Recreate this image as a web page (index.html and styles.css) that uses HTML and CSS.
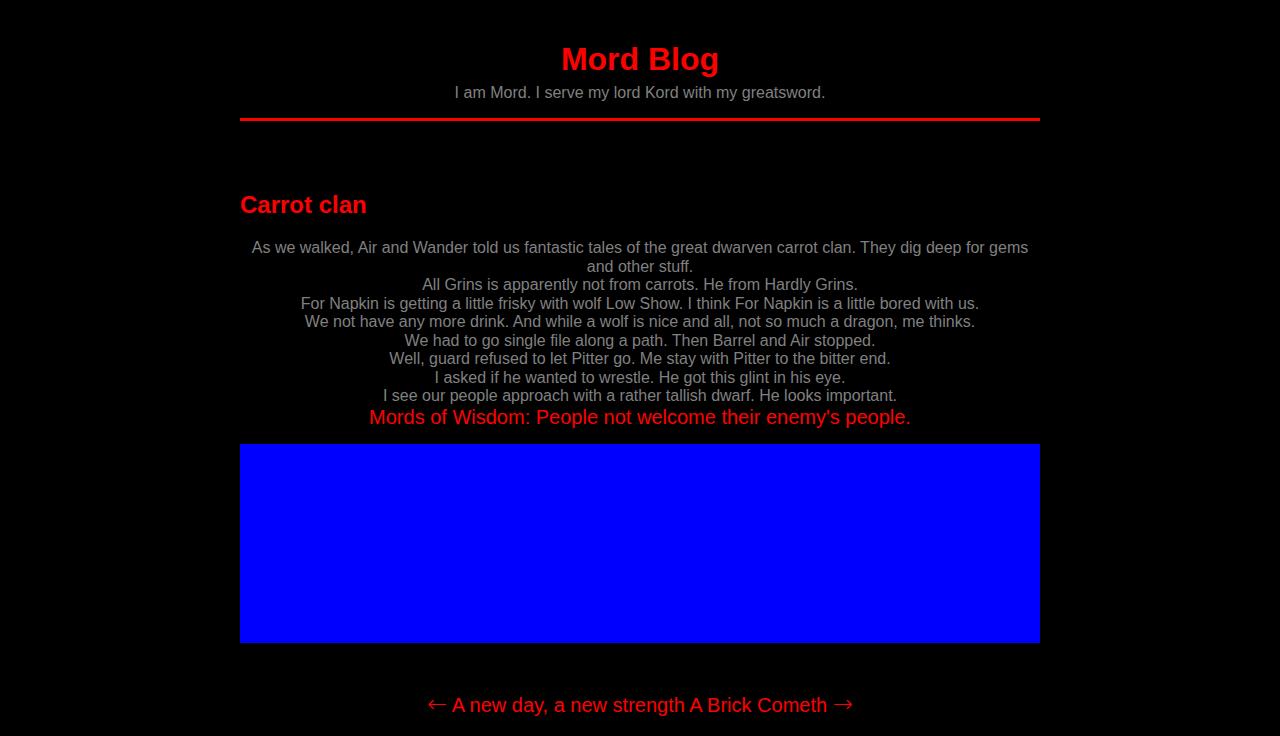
FILE: index.html
```html
<!DOCTYPE html>
<html>
<head>
<meta charset="utf-8">
<title>Mord Blog</title>
<link rel="stylesheet" href="styles.css">
</head>
<body>
<div class="wrap">
  <header class="site-header">
    <h1 class="site-title">Mord Blog</h1>
    <p class="site-desc">I am Mord. I serve my lord Kord with my greatsword.</p>
  </header>
  <main class="post">
    <h2 class="post-title">Carrot clan</h2>
    <div class="post-body">
      <p class="line">As we walked, Air and Wander told us fantastic tales of the great dwarven carrot clan. They dig deep for gems and other stuff.</p>
      <p class="line">All Grins is apparently not from carrots. He from Hardly Grins.</p>
      <p class="line">For Napkin is getting a little frisky with wolf Low Show. I think For Napkin is a little bored with us.</p>
      <p class="line">We not have any more drink. And while a wolf is nice and all, not so much a dragon, me thinks.</p>
      <p class="line">We had to go single file along a path. Then Barrel and Air stopped.</p>
      <p class="line">Well, guard refused to let Pitter go. Me stay with Pitter to the bitter end.</p>
      <p class="line">I asked if he wanted to wrestle. He got this glint in his eye.</p>
      <p class="line">I see our people approach with a rather tallish dwarf. He looks important.</p>
      <p class="wisdom">Mords of Wisdom: People not welcome their enemy's people.</p>
    </div>
    <div class="post-image"></div>
  </main>
  <nav class="post-nav">
    <a class="nav-link" href="#"><span class="arrow">←</span> A new day, a new strength</a>
    <a class="nav-link" href="#">A Brick Cometh <span class="arrow">→</span></a>
  </nav>
</div>
</body>
</html>
```

FILE: styles.css
```css
html, body {
  margin: 0;
  padding: 0;
  background: #000;
}
body {
  font-family: "Liberation Sans", Arial, sans-serif;
  color: #808080;
}
.wrap {
  width: 800px;
  margin: 0 auto;
}
.site-header {
  padding-top: 41px;
  padding-bottom: 16px;
  border-bottom: 3px solid #ff0000;
  text-align: center;
}
.site-title {
  margin: 0;
  font-size: 32px;
  font-weight: bold;
  color: #ff0000;
  line-height: 37px;
}
.site-desc {
  margin: 6px 0 0;
  font-size: 16px;
  line-height: 18px;
}
.post {
  padding-top: 70px;
}
.post-title {
  margin: 0;
  font-size: 24px;
  font-weight: bold;
  color: #ff0000;
  line-height: 28px;
}
.post-body {
  margin-top: 20px;
  text-align: center;
}
.line {
  margin: 0;
  font-size: 16px;
  line-height: 18.5px;
}
.wisdom {
  margin: 0;
  font-size: 20px;
  line-height: 23px;
  color: #ff0000;
}
.post-image {
  margin-top: 15px;
  height: 199px;
  background: #0000ff;
}
.post-nav {
  margin-top: 50px;
  text-align: center;
  font-size: 20px;
  line-height: 23px;
}
.nav-link {
  color: #ff0000;
  text-decoration: none;
}
.arrow {
  font-family: "DejaVu Sans", sans-serif;
  font-weight: 200;
  font-size: 24px;
  line-height: 23px;
}
```
